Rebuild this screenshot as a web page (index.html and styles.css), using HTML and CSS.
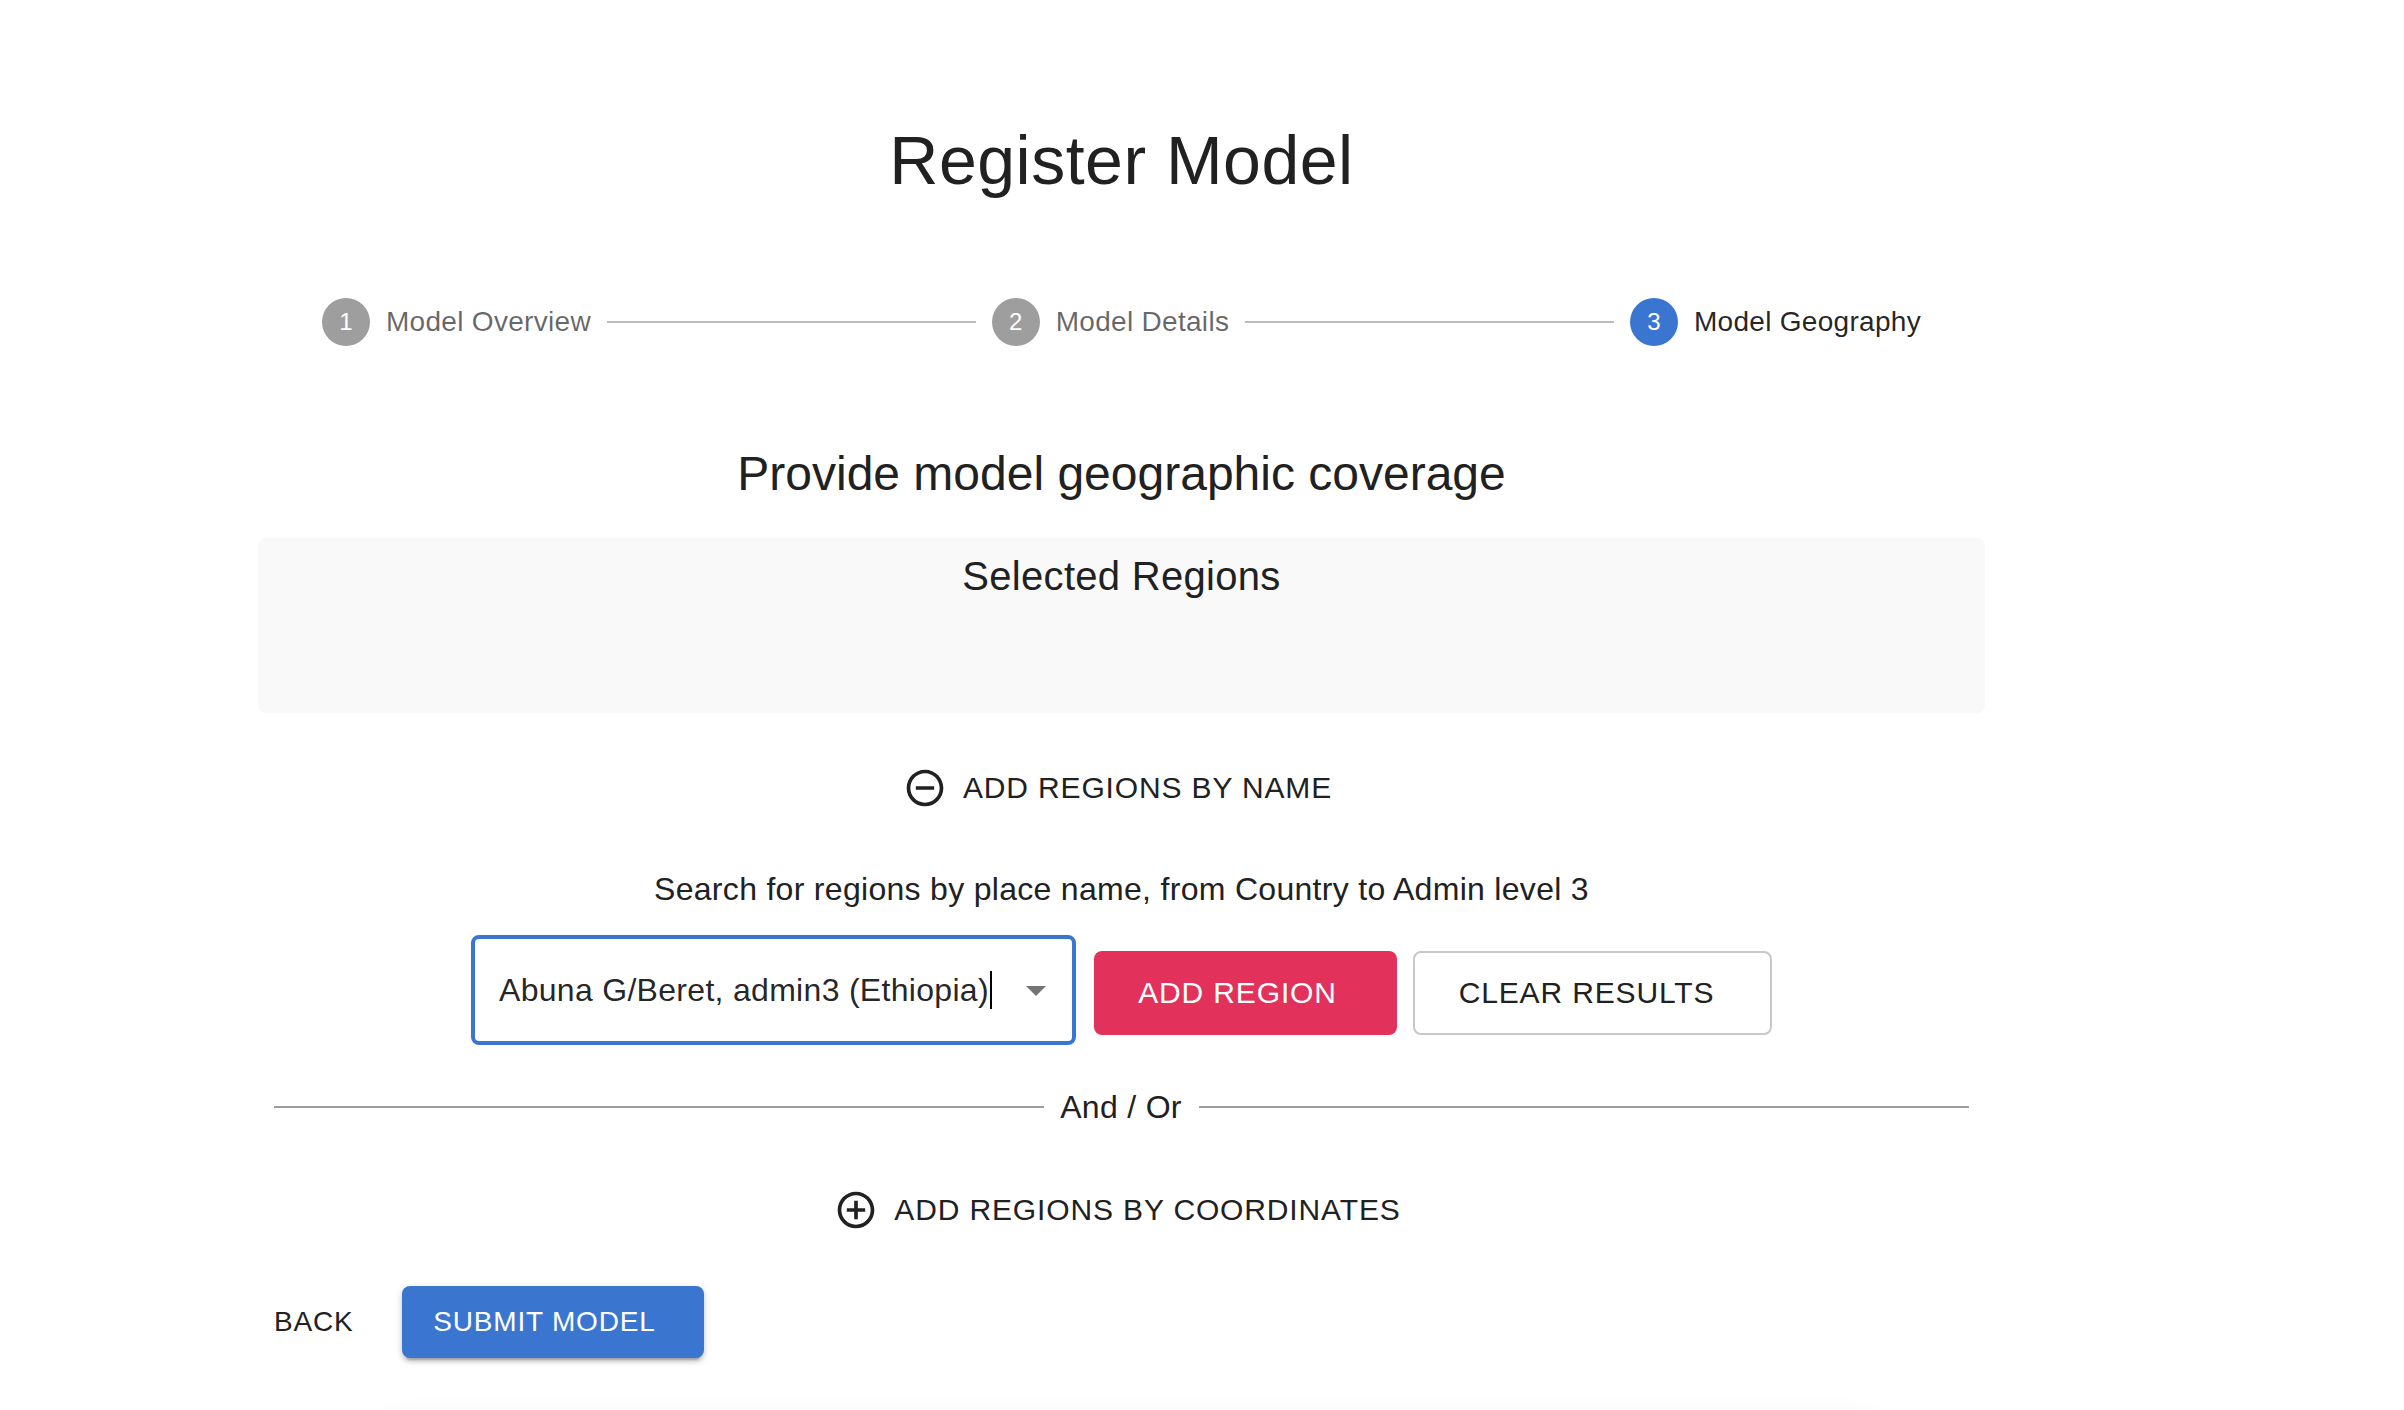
FILE: index.html
```html
<!DOCTYPE html>
<html lang="en">
<head>
<meta charset="utf-8">
<title>Register Model</title>
<link rel="stylesheet" href="styles.css">
</head>
<body>
<main class="page">
  <h1 class="title">Register Model</h1>

  <div class="stepper">
    <div class="step"><span class="step-icon">1</span><span class="step-label">Model Overview</span></div>
    <div class="connector"></div>
    <div class="step"><span class="step-icon">2</span><span class="step-label">Model Details</span></div>
    <div class="connector"></div>
    <div class="step active"><span class="step-icon">3</span><span class="step-label">Model Geography</span></div>
  </div>

  <h2 class="subtitle">Provide model geographic coverage</h2>

  <section class="selected">
    <h3 class="selected-title">Selected Regions</h3>
  </section>

  <div class="center toggle-name">
    <button class="toggle">
      <svg class="toggle-icon" viewBox="0 0 24 24"><path d="M7 11v2h10v-2H7zm5-9C6.48 2 2 6.48 2 12s4.48 10 10 10 10-4.48 10-10S17.52 2 12 2zm0 18c-4.41 0-8-3.59-8-8s3.59-8 8-8 8 3.59 8 8-3.59 8-8 8z"/></svg>
      <span>Add regions by name</span>
    </button>
  </div>

  <p class="hint">Search for regions by place name, from Country to Admin level 3</p>

  <div class="search-row">
    <div class="input">
      <span class="value">Abuna G/Beret, admin3 (Ethiopia)</span><span class="caret"></span>
      <span class="spacer"></span>
      <svg class="arrow" viewBox="0 0 24 24"><path d="M7 10l5 5 5-5z"/></svg>
    </div>
    <button class="btn-red">Add region</button>
    <button class="btn-outline">Clear results</button>
  </div>

  <div class="divider"><span class="divider-text">And / Or</span></div>

  <div class="center toggle-coords">
    <button class="toggle">
      <svg class="toggle-icon" viewBox="0 0 24 24"><path d="M13 7h-2v4H7v2h4v4h2v-4h4v-2h-4V7zm-1-5C6.48 2 2 6.48 2 12s4.48 10 10 10 10-4.48 10-10S17.52 2 12 2zm0 18c-4.41 0-8-3.59-8-8s3.59-8 8-8 8 3.59 8 8-3.59 8-8 8z"/></svg>
      <span>Add regions by coordinates</span>
    </button>
  </div>

  <div class="actions">
    <button class="btn-text">Back</button>
    <button class="btn-blue">Submit model</button>
  </div>

  <div class="below"></div>
</main>
</body>
</html>
```

FILE: styles.css
```css
html, body {
  margin: 0;
  padding: 0;
  background: #ffffff;
}

body {
  font-family: "Liberation Sans", Arial, Helvetica, sans-serif;
  color: rgba(0, 0, 0, 0.87);
  overflow: hidden;
}

.page {
  width: 1727px;
  margin-left: 258px;
}

.title {
  margin: 118px 0 48px;
  font-size: 68px;
  line-height: 84px;
  font-weight: 400;
  letter-spacing: 0.00735em;
  text-align: center;
  color: #212121;
}

/* Stepper */
.stepper {
  display: flex;
  align-items: center;
  padding: 48px;
}

.step {
  display: flex;
  align-items: center;
  padding: 0 16px;
}

.step-icon {
  width: 48px;
  height: 48px;
  border-radius: 50%;
  background: #9e9e9e;
  color: #ffffff;
  font-size: 24px;
  display: flex;
  align-items: center;
  justify-content: center;
}

.step-label {
  margin-left: 16px;
  font-size: 28px;
  line-height: 40px;
  letter-spacing: 0.01071em;
  color: rgba(0, 0, 0, 0.6);
}

.step.active .step-icon {
  background: #3a76cf;
}

.step.active .step-label {
  color: rgba(0, 0, 0, 0.87);
}

.connector {
  flex: 1 1 auto;
  border-top: 2px solid #bdbdbd;
}

/* Heading */
.subtitle {
  margin: 48px 0 0;
  font-size: 48px;
  line-height: 64px;
  font-weight: 400;
  text-align: center;
  color: #212121;
}

.selected {
  margin-top: 32px;
  height: 175px;
  box-sizing: border-box;
  padding-top: 6px;
  background: #f9f9f9;
  border-radius: 8px;
}

.selected-title {
  margin: 0;
  font-size: 40px;
  line-height: 64px;
  font-weight: 400;
  letter-spacing: 0.0075em;
  text-align: center;
  color: #212121;
}

/* Toggle buttons */
.center {
  display: flex;
  justify-content: center;
}

.toggle-name {
  margin-top: 33px;
}

.toggle-coords {
  margin-top: 37px;
}

.toggle {
  display: inline-flex;
  align-items: center;
  height: 84px;
  padding: 0 44px;
  border: 0;
  background: none;
  font-family: inherit;
  font-size: 30px;
  letter-spacing: 0.02857em;
  text-transform: uppercase;
  color: #212121;
}

.toggle-icon {
  width: 44px;
  height: 44px;
  margin-left: -8px;
  margin-right: 16px;
  fill: #212121;
}

.hint {
  margin: 35px 0 0;
  font-size: 32px;
  line-height: 48px;
  letter-spacing: 0.00938em;
  text-align: center;
  color: #212121;
}

/* Search row */
.search-row {
  display: flex;
  justify-content: center;
  align-items: center;
  margin-top: 22px;
}

.input {
  width: 605px;
  height: 110px;
  box-sizing: border-box;
  border: 4px solid #3a76cf;
  border-radius: 8px;
  display: flex;
  align-items: center;
  padding: 0 12px 0 24px;
  font-size: 32px;
  letter-spacing: 0.00938em;
  color: rgba(0, 0, 0, 0.87);
}

.value {
  white-space: nowrap;
}

.caret {
  display: inline-block;
  width: 2px;
  height: 38px;
  margin-left: 1px;
  background: #000000;
}

.spacer {
  flex: 1 1 auto;
}

.arrow {
  width: 48px;
  height: 48px;
  fill: rgba(0, 0, 0, 0.54);
}

.btn-red,
.btn-outline,
.btn-blue,
.btn-text {
  font-family: inherit;
  text-transform: uppercase;
  letter-spacing: 0.02857em;
  cursor: pointer;
}

.btn-red {
  margin: 6px 0 0 18px;
  width: 303px;
  height: 84px;
  padding: 0 16px 0 0;
  border: 0;
  border-radius: 8px;
  background: #e2315a;
  color: #ffffff;
  font-size: 30px;
}

.btn-outline {
  margin: 6px 0 0 16px;
  width: 359px;
  height: 84px;
  padding: 0 12px 0 0;
  border: 2px solid #c8c8c8;
  border-radius: 8px;
  background: #ffffff;
  color: #212121;
  font-size: 30px;
}

/* Divider */
.divider {
  display: flex;
  align-items: center;
  margin: 38px 16px 0;
  font-size: 32px;
  line-height: 48px;
  letter-spacing: 0.00938em;
  color: #212121;
}

.divider::before,
.divider::after {
  content: "";
  flex: 1 1 auto;
  border-top: 2px solid #9e9e9e;
}

.divider-text {
  padding: 0 17px 0 16px;
}

/* Actions */
.actions {
  display: flex;
  align-items: center;
  margin-top: 34px;
}

.btn-text {
  height: 72px;
  padding: 0 16px;
  border: 0;
  background: none;
  font-size: 28px;
  color: #212121;
}

.btn-blue {
  margin-left: 33px;
  width: 302px;
  height: 72px;
  padding: 0 18px 0 0;
  border: 0;
  border-radius: 8px;
  background: #3a76cf;
  color: #ffffff;
  font-size: 28px;
  box-shadow: 0 6px 2px -4px rgba(0, 0, 0, 0.2), 0 4px 4px 0 rgba(0, 0, 0, 0.14), 0 2px 10px 0 rgba(0, 0, 0, 0.12);
}

.below {
  margin: 62px 110px 0 125px;
  height: 300px;
  border-radius: 8px;
  background: #ffffff;
  box-shadow: 0 0 30px rgba(0, 0, 0, 0.06);
}
```
